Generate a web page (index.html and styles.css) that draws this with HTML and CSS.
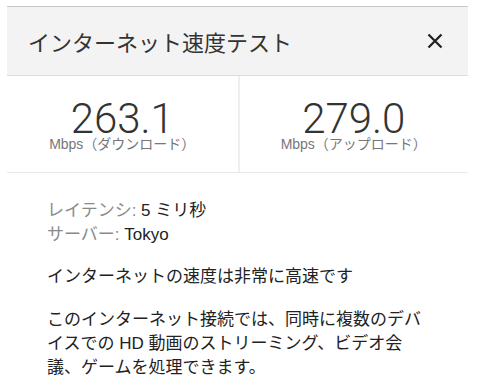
FILE: index.html
```html
<!DOCTYPE html>
<html lang="ja">
<head>
    <meta charset="UTF-8">
    <meta name="viewport" content="width=device-width, initial-scale=1.0">
    <title>インターネット速度テスト</title>
    <link rel="stylesheet" href="styles.css">
</head>
<body>
    <div class="panel">
        <div class="header">
            <h2>インターネット速度テスト</h2>
            <svg class="close" width="16" height="16" viewBox="0 0 16 16">
                <path d="M1.5 1.5 L14.5 14.5 M14.5 1.5 L1.5 14.5" stroke="#222" stroke-width="2.3" fill="none"/>
            </svg>
        </div>
        <div class="stats">
            <div class="stat">
                <div class="value">263.1</div>
                <div class="unit">Mbps（ダウンロード）</div>
            </div>
            <div class="stat">
                <div class="value">279.0</div>
                <div class="unit">Mbps（アップロード）</div>
            </div>
        </div>
        <div class="details">
            <div class="info">
                <p><span class="label">レイテンシ:</span> 5 ミリ秒</p>
                <p><span class="label">サーバー:</span> Tokyo</p>
            </div>
            <p class="summary">インターネットの速度は非常に高速です</p>
            <p class="summary">このインターネット接続では、同時に複数のデバイスでの HD 動画のストリーミング、ビデオ会議、ゲームを処理できます。</p>
        </div>
    </div>
</body>
</html>
```

FILE: styles.css
```css
body {
    font-family: 'Liberation Sans', 'Noto Sans CJK JP', sans-serif;
    margin: 0;
    padding: 0;
    background: #ffffff;
    color: #222;
}

.panel {
    margin: 6px 10px 0 7px;
    border-top: 1px solid #c8c8c8;
}

.header {
    display: flex;
    justify-content: space-between;
    align-items: center;
    height: 68px;
    padding: 0 25px 0 21px;
    background: #f3f3f3;
    border-bottom: 1px solid #dcdcdc;
}

.header h2 {
    margin: 0;
    font-size: 22px;
    font-weight: normal;
    color: #333;
}

.stats {
    display: grid;
    grid-template-columns: 1fr 1fr;
    border-bottom: 1px solid #e8e8e8;
}

.stat {
    text-align: center;
    padding: 24px 0 21px;
}

.stat + .stat {
    border-left: 2px solid #efefef;
}

.stat .value {
    font-family: Roboto, 'Liberation Sans', sans-serif;
    font-weight: 300;
    font-size: 42px;
    line-height: 37px;
    color: #333;
}

.stat .unit {
    font-size: 14px;
    line-height: 14px;
    color: #777;
}

.details {
    padding: 26px 40px 0;
    font-size: 17px;
    line-height: 24px;
}

.details p {
    margin: 0;
}

.info {
    margin-bottom: 18px;
}

.label {
    color: #8a8a8a;
}

.summary {
    color: #222;
}

.summary + .summary {
    margin-top: 19px;
}
```
